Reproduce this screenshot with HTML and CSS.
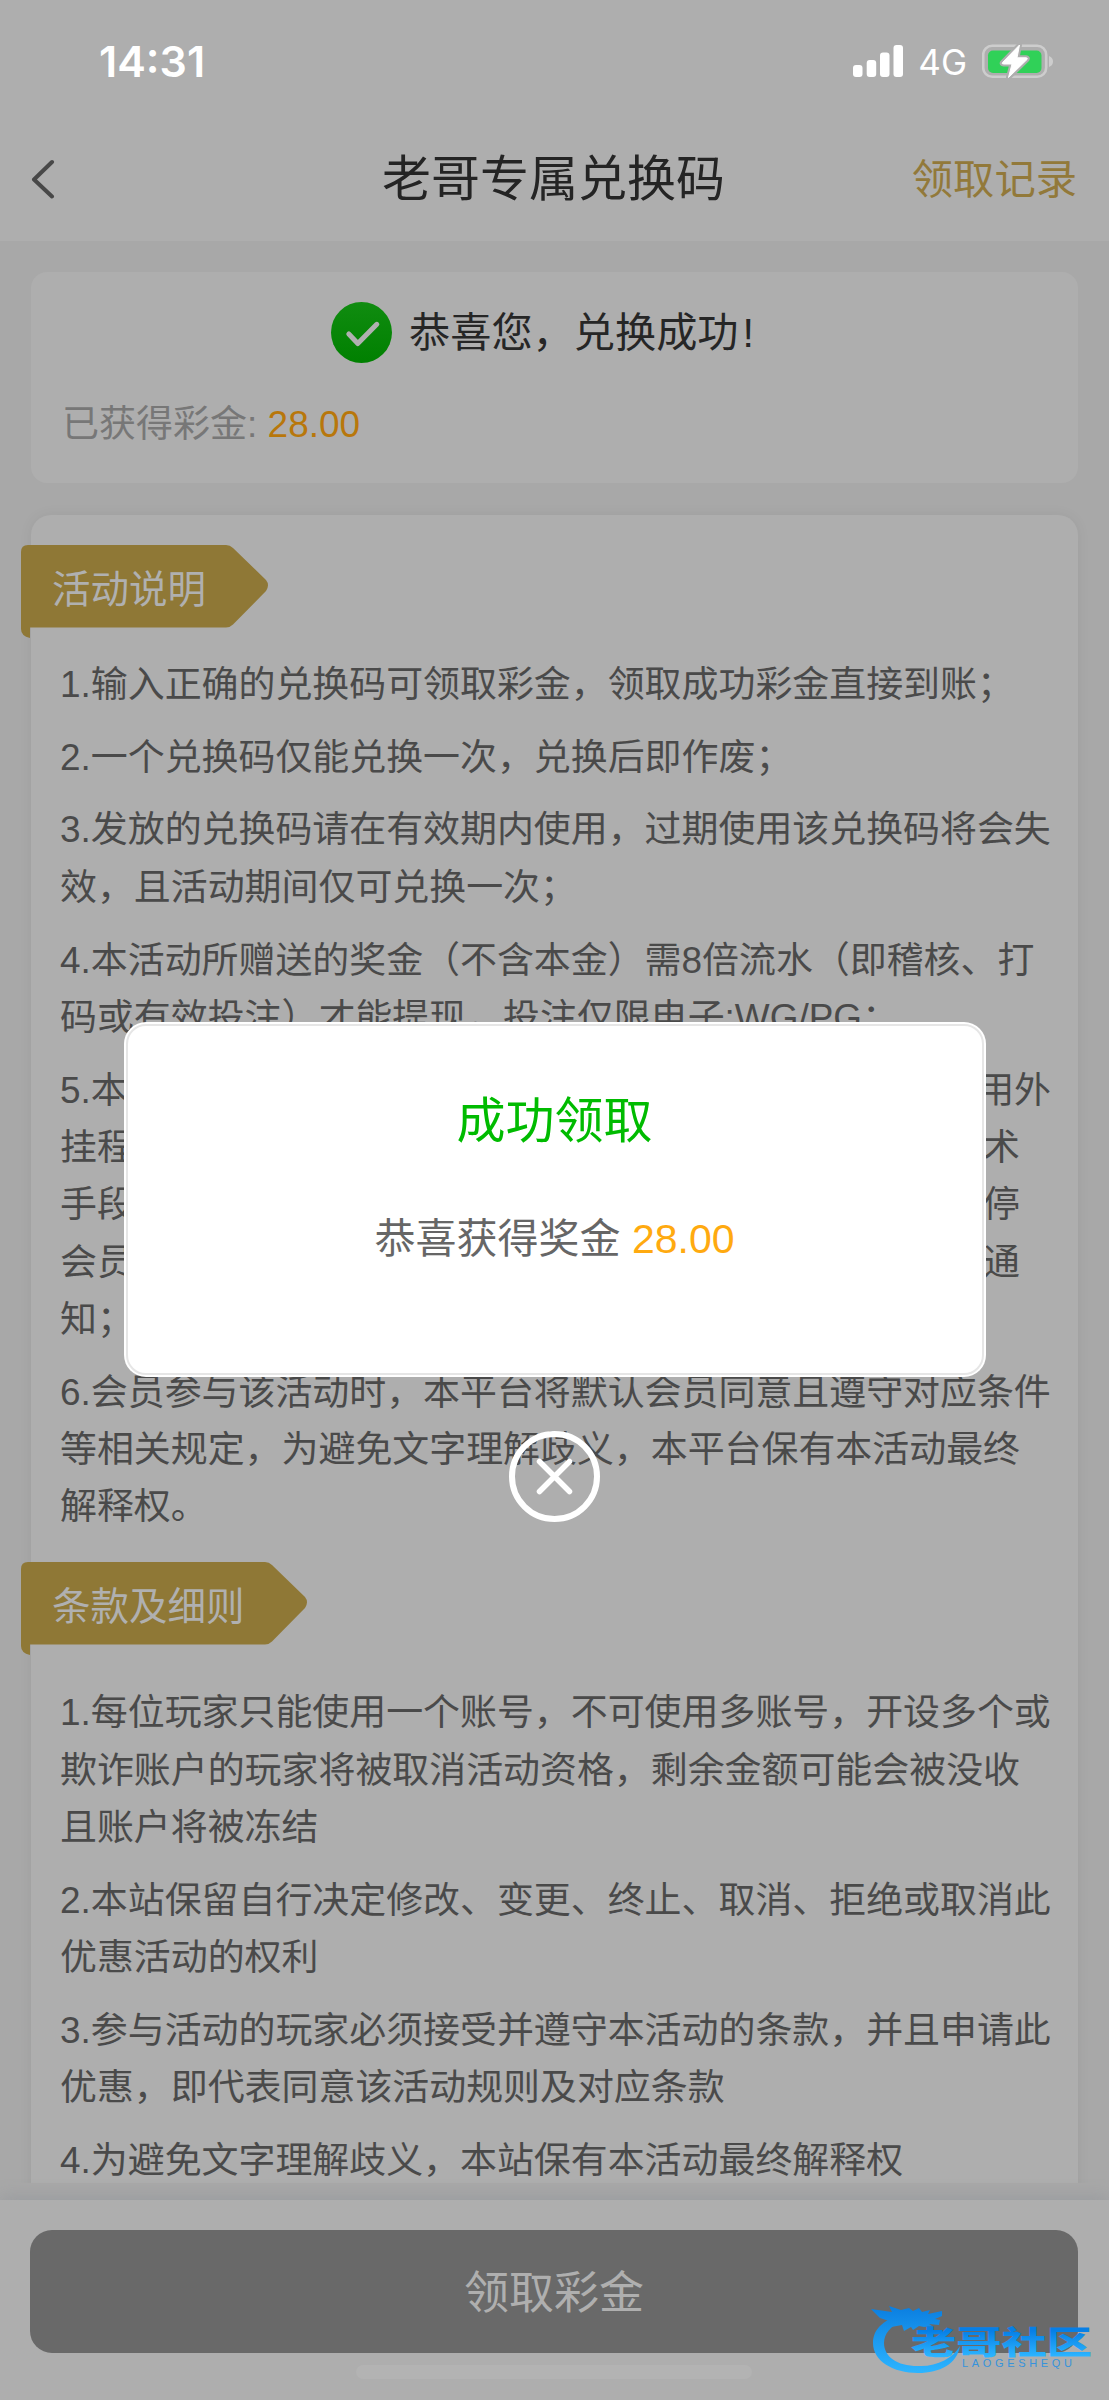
FILE: index.html
```html
<!DOCTYPE html>
<html lang="zh-CN">
<head>
<meta charset="utf-8">
<title>老哥专属兑换码</title>
<link rel="stylesheet" href="styles.css">
</head>
<body>
<div class="page">
  <header class="top">
    <div class="status">
      <span class="time">14:31</span>
      <div class="status-right">
        <svg class="signal" width="50" height="32" viewBox="0 0 50 32" fill="#fff">
          <rect x="0" y="20" width="9.5" height="12" rx="3"/><rect x="13.7" y="15" width="9.5" height="17" rx="3"/>
          <rect x="27" y="7.500" width="9.500" height="24.500" rx="3"/><rect x="40.500" y="0" width="9.500" height="32" rx="3"/>
        </svg>
        <span class="net">4G</span>
        <svg class="battery" width="72" height="36" viewBox="0 0 72 36">
          <rect x="1.200" y="2.700" width="63" height="31" rx="9" fill="none" stroke="#cdcdcd" stroke-width="2.600"/>
          <rect x="6" y="7.500" width="53.500" height="22.500" rx="5" fill="#30d158"/>
          <path d="M67 13q4 1.500 4 5.500t-4 5.500z" fill="#cdcdcd"/>
          <path d="M37.500 2L20.500 19.500q-1 1.500 1 1.500h8.500l-3.500 13.500L45 16.500q1-1.700-1-1.700h-9z" fill="#fff" stroke="#aeaeae" stroke-width="5" stroke-linejoin="round"/>
          <path d="M37.500 2L20.500 19.500q-1 1.500 1 1.500h8.500l-3.500 13.500L45 16.500q1-1.700-1-1.700h-9z" fill="#fff" stroke="#fff" stroke-linejoin="round"/>
        </svg>
      </div>
    </div>
    <nav class="nav">
      <svg class="back" width="26" height="40" viewBox="0 0 26 40" fill="none" stroke="#484848" stroke-width="4" stroke-linecap="round" stroke-linejoin="round"><path d="M22 3L4 20.500l18 17"/></svg>
      <h1 class="title">老哥专属兑换码</h1>
      <span class="records">领取记录</span>
    </nav>
  </header>

  <main class="content">
    <section class="card result">
      <div class="result-head">
        <svg width="61" height="61" viewBox="0 0 61 61"><defs><linearGradient id="ok" x1="0" y1="0" x2="0" y2="1"><stop offset="0" stop-color="#108c10"/><stop offset="1" stop-color="#008000"/></linearGradient></defs><circle cx="30.500" cy="30.500" r="30.500" fill="url(#ok)"/><path d="M17.800 32l9 9.500 19-19.200" fill="none" stroke="#b0b0b0" stroke-width="5" stroke-linecap="round" stroke-linejoin="round"/></svg>
        <span class="result-text">恭喜您，兑换成功<span class="bang">!</span></span>
      </div>
      <p class="gained">已获得彩金: <span class="amount">28.00</span></p>
    </section>

    <section class="card rules">
      <h2 class="ribbon"><svg width="249" height="93" viewBox="0 0 249 93"><path d="M7 0H205q4 0 7 3L245 35q4 5 0 11L212 79.500q-3 3-7 3H9V93Q0 91 0 84V7Q0 0 7 0z" fill="#8f7836"/></svg><span>活动说明</span></h2>
      <ol class="list">
        <li>1.输入正确的兑换码可领取彩金，领取成功彩金直接到账；</li>
        <li>2.一个兑换码仅能兑换一次，兑换后即作废；</li>
        <li>3.发放的兑换码请在有效期内使用，过期使用该兑换码将会失<br>效，且活动期间仅可兑换一次；</li>
        <li>4.本活动所赠送的奖金（不含本金）需8倍流水（即稽核、打<br>码或有效投注）才能提现，投注仅限电子:WG/PG；</li>
        <li>
          <div class="row wide"><span>5.本</span><span>用外</span></div>
          <div class="row"><span>挂程</span><span>术</span></div>
          <div class="row"><span>手段</span><span>停</span></div>
          <div class="row"><span>会员</span><span>通</span></div>
          <div class="row"><span>知；</span></div>
        </li>
        <li>6.会员参与该活动时，本平台将默认会员同意且遵守对应条件<br>等相关规定，为避免文字理解歧义，本平台保有本活动最终<br>解释权。</li>
      </ol>
      <h2 class="ribbon second"><svg width="288" height="93" viewBox="0 0 288 93"><path d="M7 0H244q4 0 7 3L284 35q4 5 0 11L251 79.500q-3 3-7 3H9V93Q0 91 0 84V7Q0 0 7 0z" fill="#8f7836"/></svg><span>条款及细则</span></h2>
      <ol class="list terms">
        <li>1.每位玩家只能使用一个账号，不可使用多账号，开设多个或<br>欺诈账户的玩家将被取消活动资格，剩余金额可能会被没收<br>且账户将被冻结</li>
        <li>2.本站保留自行决定修改、变更、终止、取消、拒绝或取消此<br>优惠活动的权利</li>
        <li>3.参与活动的玩家必须接受并遵守本活动的条款，并且申请此<br>优惠，即代表同意该活动规则及对应条款</li>
        <li>4.为避免文字理解歧义，本站保有本活动最终解释权</li>
      </ol>
    </section>
  </main>

  <footer class="footer">
    <button class="claim">领取彩金</button>
    <div class="home-bar"></div>
  </footer>

  <div class="overlay">
    <div class="dialog">
      <div class="dialog-inner">
        <h3>成功领取</h3>
        <p>恭喜获得奖金 <span>28.00</span></p>
      </div>
    </div>
    <svg class="close" width="91" height="91" viewBox="0 0 91 91" fill="none" stroke="#fff" stroke-linecap="round"><circle cx="45.500" cy="45.500" r="42.500" stroke-width="6"/><path d="M30.500 30.500l30 30m0-30l-30 30" stroke-width="5.500"/></svg>
  </div>

  <svg class="watermark" width="230" height="80" viewBox="0 0 230 80">
    <defs>
      <linearGradient id="wm" gradientUnits="userSpaceOnUse" x1="0" y1="6" x2="0" y2="72"><stop offset="0" stop-color="#0a7ee0"/><stop offset="1" stop-color="#2cb4ff"/></linearGradient>
      <linearGradient id="wt" x1="0" y1="0" x2="0" y2="1"><stop offset=".3" stop-color="#067fe6"/><stop offset=".85" stop-color="#2cb4ff"/></linearGradient>
    </defs>
    <path d="M38 13C14 18 3 29 3 43c0 18 20 30 45 30 22 0 39-9 42-27-7 12-22 20-39 20C28 67 14 57 14 43c0-9 6-16 18-23z" fill="url(#wm)"/>
    <path d="M1 9l14 2 7 1-3-6 12 4 8-2 4 3 6-3 3 4 8-2-2 4 14-3v5l-7 3 5 1-1 5-10-1 3 2-8 1-5-1-6 4-2-3-7 4-2-6-16 3 6-6-12-4z" fill="url(#wm)"/>
    <text class="wm-name" x="41" y="54" textLength="181" lengthAdjust="spacingAndGlyphs" fill="url(#wt)">老哥社区</text>
    <text class="wm-latin" x="92" y="67" textLength="110" fill="#3693dc">LAOGESHEQU</text>
  </svg>
</div>
</body>
</html>
```
FILE: styles.css
```css
* { box-sizing: border-box; margin: 0; padding: 0; }
body { background: #a8a8a8; font-family: "Liberation Sans", "Noto Sans CJK SC", sans-serif; font-weight: 400; }
h1, h2, h3 { font-weight: 400; }
.page { position: relative; width: 1109px; height: 2400px; overflow: hidden; display: flex; flex-direction: column; background: #a8a8a8; }
.top { height: 241px; flex: none; background: #aeaeae; }
.status { height: 120px; padding: 1px 55px 0 99px; display: flex; justify-content: space-between; align-items: center; color: #fff; font-family: Inter, "Liberation Sans", sans-serif; }
.time { font-size: 43px; font-weight: 600; line-height: 50px; }
.status-right { display: flex; align-items: center; }
.net { font-size: 35px; line-height: 40px; margin: 2px 15px 0 15px; }
.nav { height: 118px; padding: 0 32px 0 30px; display: grid; grid-template-columns: 1fr auto 1fr; align-items: center; }
.title { font-size: 49px; line-height: 70px; color: #242424; }
.records { justify-self: end; margin-top: 2px; font-size: 41.300px; line-height: 60px; color: #92793a; }
.content { height: 1942px; flex: none; overflow: hidden; padding: 31px 31px 0; }
.card { background: #aeaeae; }
.result { height: 211px; border-radius: 16px; padding: 30px 31px 0; }
.result-head { display: flex; justify-content: center; align-items: center; gap: 17px; height: 61px; padding-right: 24px; font-size: 41.200px; color: #262626; }
.result-text { line-height: 57px; margin-top: 1px; }
.bang { margin-left: 4px; }
.gained { margin-top: 34px; font-size: 37px; line-height: 56px; color: #777; }
.amount { color: #b8770b; }
.rules { margin-top: 32px; height: 1700px; border-radius: 20px; padding-top: 30px; box-shadow: 0 0 14px rgba(0, 0, 0, .06); }
.ribbon { position: relative; margin-left: -10px; height: 83px; color: #b0b0b0; font-size: 38.500px; line-height: 89px; padding-left: 31px; }
.ribbon svg { position: absolute; left: 0; top: 0; }
.ribbon span { position: relative; }
.list { list-style: none; padding: 28px 0 26.600px 29px; display: flex; flex-direction: column; gap: 15.400px; font-size: 36.930px; line-height: 57.350px; color: #4a4a4a; white-space: nowrap; }
.row { width: 960px; display: flex; justify-content: space-between; }
.row.wide { width: 991px; }
.terms { padding-top: 39px; }
.footer { flex: 1; margin-top: 17px; padding: 30px 31px 0 30px; background: #aeaeae; box-shadow: 0 -4px 16px rgba(110, 120, 130, .22); display: flex; flex-direction: column; align-items: center; gap: 12px; }
.claim { width: 100%; height: 123px; padding-top: 4px; border: 0; border-radius: 22px; background: #696969; color: #afafaf; font: 45px/119px "Liberation Sans", "Noto Sans CJK SC", sans-serif; }
.home-bar { width: 396px; height: 14px; border-radius: 7px; background: #b3b3b3; }
.overlay { position: absolute; inset: 0; padding-top: 1022px; display: flex; flex-direction: column; align-items: center; gap: 54px; }
.dialog { width: 862px; height: 355px; padding: 2px; border-radius: 22px; background: #fff; }
.dialog-inner { height: 351px; border: 2.500px solid #e6e6e6; border-radius: 20px; text-align: center; padding-top: 60px; }
.dialog h3 { font-size: 49px; line-height: 70px; color: #0b0; }
.dialog p { margin-top: 53px; font-size: 41px; line-height: 60px; color: #666; }
.dialog p span { color: #ffaa10; }
.watermark { position: absolute; left: 870px; top: 2300px; }
.wm-name { font-family: "Noto Sans CJK SC", sans-serif; font-weight: 900; font-size: 32px; }
.wm-latin { font-family: "Liberation Sans", sans-serif; font-size: 11px; }
```
